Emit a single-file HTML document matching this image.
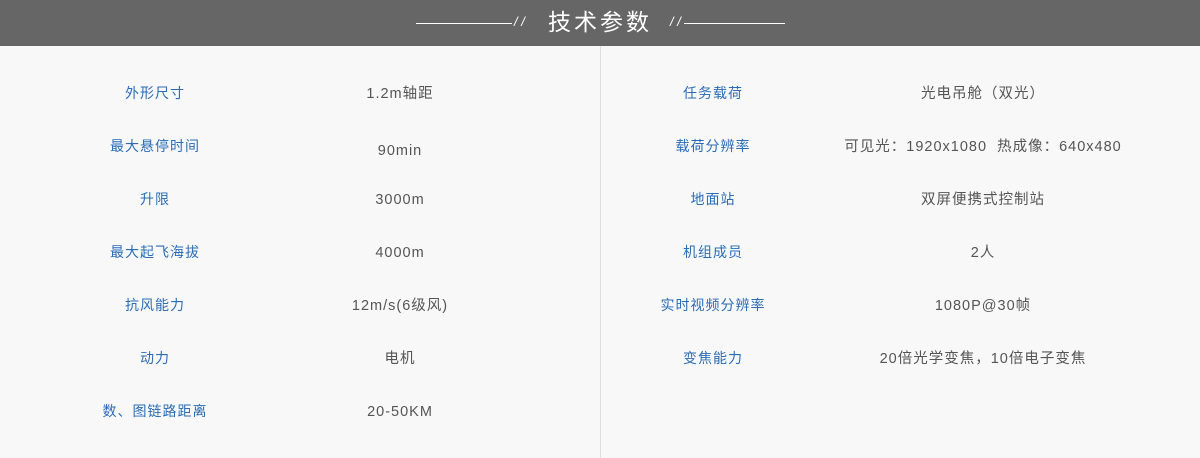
<!DOCTYPE html>
<html><head><meta charset="utf-8"><style>
body{margin:0;width:1200px;height:458px;background:#f8f8f8;position:relative;overflow:hidden;font-family:"Liberation Sans","Noto Sans CJK SC",sans-serif;}
.hd{position:absolute;left:0;top:0;width:1200px;height:46px;background:#666;}
.t{position:absolute;left:0;width:1200px;top:6px;text-align:center;color:#fff;font-size:23px;letter-spacing:3px;line-height:32px;}
.ln{position:absolute;top:23px;height:1px;background:#fff;}
.sl{position:absolute;top:14px;color:#fff;font-size:13px;font-style:italic;}
.dv{position:absolute;left:600px;top:46px;width:1px;height:412px;background:#ddd;}
.c{position:absolute;width:300px;text-align:center;font-size:14px;letter-spacing:1px;line-height:20px;}
.l{color:#2a6cb8;}.v{color:#555;font-size:14.5px;letter-spacing:1px;line-height:22px;}
</style></head><body>
<div class="hd"></div>
<div class="ln" style="left:416px;width:96px"></div>
<div class="sl" style="left:514px">/ /</div>
<div class="t">技术参数</div>
<div class="sl" style="left:670px">/ /</div>
<div class="ln" style="left:684px;width:101px"></div>
<div class="dv"></div>

<div class="c l" style="left:5px;top:83px">外形尺寸</div><div class="c v" style="left:250px;top:83px">1.2m轴距</div>
<div class="c l" style="left:5px;top:136px">最大悬停时间</div><div class="c v" style="left:250px;top:140px">90min</div>
<div class="c l" style="left:5px;top:189px">升限</div><div class="c v" style="left:250px;top:189px">3000m</div>
<div class="c l" style="left:5px;top:242px">最大起飞海拔</div><div class="c v" style="left:250px;top:242px">4000m</div>
<div class="c l" style="left:5px;top:295px">抗风能力</div><div class="c v" style="left:250px;top:295px">12m/s(6级风)</div>
<div class="c l" style="left:5px;top:348px">动力</div><div class="c v" style="left:250px;top:348px">电机</div>
<div class="c l" style="left:5px;top:401px">数、图链路距离</div><div class="c v" style="left:250px;top:401px">20-50KM</div>

<div class="c l" style="left:563px;top:83px">任务载荷</div><div class="c v" style="left:833px;top:83px">光电吊舱（双光）</div>
<div class="c l" style="left:563px;top:136px">载荷分辨率</div><div class="c v" style="left:783px;top:136px;width:400px">可见光：1920x1080&nbsp; 热成像：640x480</div>
<div class="c l" style="left:563px;top:189px">地面站</div><div class="c v" style="left:833px;top:189px">双屏便携式控制站</div>
<div class="c l" style="left:563px;top:242px">机组成员</div><div class="c v" style="left:833px;top:242px">2人</div>
<div class="c l" style="left:563px;top:295px">实时视频分辨率</div><div class="c v" style="left:833px;top:295px">1080P@30帧</div>
<div class="c l" style="left:563px;top:348px">变焦能力</div><div class="c v" style="left:833px;top:348px">20倍光学变焦，10倍电子变焦</div>
</body></html>
